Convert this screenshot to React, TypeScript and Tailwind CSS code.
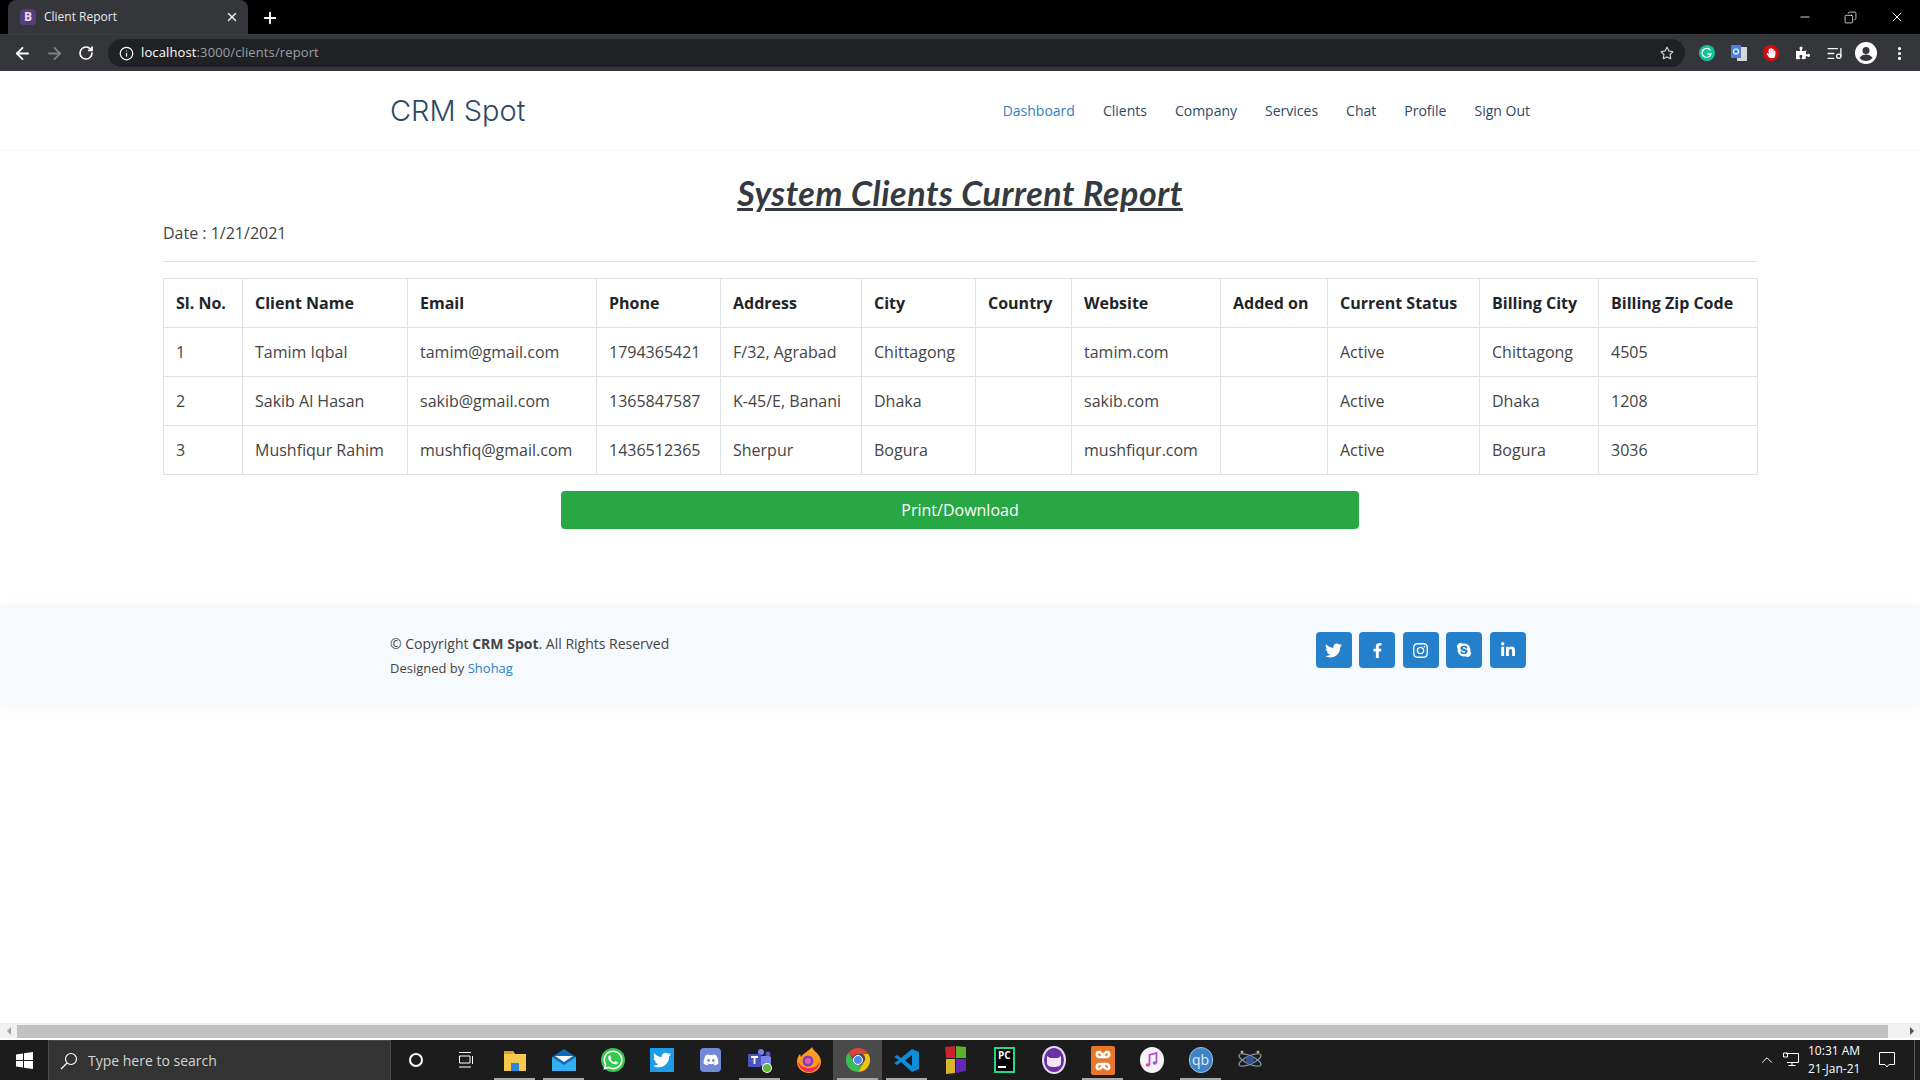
import React from "react";
import { FaTwitter, FaFacebookF, FaInstagram, FaSkype, FaLinkedinIn, FaWhatsapp, FaDiscord, FaPuzzlePiece, FaRegStar, FaHandPaper } from "react-icons/fa";
import { ArrowLeft, ArrowRight, RotateCw, Info, Plus, X, Minus, ChevronUp, ListMusic, EllipsisVertical, Copy } from "lucide-react";

const cols = [79, 165, 189, 124, 141, 114, 96, 149, 107, 152, 119, 159];
const heads = ["Sl. No.", "Client Name", "Email", "Phone", "Address", "City", "Country", "Website", "Added on", "Current Status", "Billing City", "Billing Zip Code"];
const rows = [
  ["1", "Tamim Iqbal", "tamim@gmail.com", "1794365421", "F/32, Agrabad", "Chittagong", "", "tamim.com", "", "Active", "Chittagong", "4505"],
  ["2", "Sakib Al Hasan", "sakib@gmail.com", "1365847587", "K-45/E, Banani", "Dhaka", "", "sakib.com", "", "Active", "Dhaka", "1208"],
  ["3", "Mushfiqur Rahim", "mushfiq@gmail.com", "1436512365", "Sherpur", "Bogura", "", "mushfiqur.com", "", "Active", "Bogura", "3036"],
];
const nav = ["Dashboard", "Clients", "Company", "Services", "Chat", "Profile", "Sign Out"];

function Chrome() {
  return (
    <div className="shrink-0 bg-black" style={{ fontFamily: '"Open Sans", sans-serif' }}>
      <div className="flex h-[34px] items-end pl-2">
        <div className="flex h-[34px] w-[240px] items-center rounded-t-lg bg-[#35363a] pl-3 pr-[9px] text-white">
          <span className="flex h-4 w-4 items-center justify-center rounded-sm bg-[#563d7c] text-[12px] font-bold leading-none text-[#e8e0f4]">B</span>
          <span className="ml-2 flex-1 text-[12px] text-[#e8eaed]">Client Report</span>
          <X size={14} strokeWidth={2.5} className="text-[#e8eaed]" />
        </div>
        <Plus size={18} strokeWidth={2.5} className="mb-[7px] ml-[13px] text-white" />
        <div className="mb-[9px] ml-auto flex items-center gap-[32px] pr-[15px] text-white">
          <Minus size={14} strokeWidth={1.4} />
          <Copy size={13} strokeWidth={1.4} className="-scale-x-100" />
          <X size={16} strokeWidth={1.4} />
        </div>
      </div>
      <div className="flex h-[37px] items-center border-t border-[#3c3d40] bg-[#35363a] pl-[13px] pr-[12px]">
        <ArrowLeft size={19} strokeWidth={2.3} className="text-white" />
        <ArrowRight size={19} strokeWidth={2.3} className="ml-[13px] text-[#7e8083]" />
        <RotateCw size={16} strokeWidth={2.5} className="ml-[14px] text-white" />
        <div className="ml-[14px] flex h-7 flex-1 items-center rounded-full bg-[#202124] pl-[11px] pr-[11px]">
          <Info size={15} strokeWidth={2} className="text-white" />
          <span className="ml-[7px] flex-1 text-[13px] tracking-[0.12px] text-[#9aa0a6]"><span className="text-white">localhost</span>:3000/clients/report</span>
          <FaRegStar size={14} className="text-[#d0d2d5]" />
        </div>
        <div className="ml-[14px] flex items-center text-white">
          <svg width="16" height="16" viewBox="0 0 16 16"><circle cx="8" cy="8" r="8" fill="#15c39a" /><path d="M11.5 5.500A4.500 4.500 0 1 0 12 9H8.500" fill="none" stroke="#fff" strokeWidth="1.3" /></svg>
          <svg width="16" height="16" viewBox="0 0 16 16" className="ml-[16px]"><rect x="6" y="2" width="10" height="14" fill="#d5d7da" /><rect width="10" height="13" fill="#4a80de" /><circle cx="5" cy="6.500" r="2.500" fill="none" stroke="#fff" strokeWidth="1.2" /></svg>
          <div className="ml-[16px] flex h-4 w-4 items-center justify-center rounded-full bg-[#d60b12]"><FaHandPaper size={10} className="text-white" /></div>
          <FaPuzzlePiece size={14} className="ml-[17px]" />
          <ListMusic size={17} strokeWidth={1.8} className="ml-[16px]" />
          <svg width="22" height="22" viewBox="0 0 22 22" className="ml-[12px]"><circle cx="11" cy="11" r="11" fill="#fff" /><circle cx="11" cy="8.500" r="3.500" fill="#35363a" /><path d="M4.500 16c1.500-2.500 4-3.500 6.500-3.500s5 1 6.500 3.500c-1.500 2-4 3-6.500 3s-5-1-6.500-3z" fill="#35363a" /></svg>
          <EllipsisVertical size={17} strokeWidth={2.5} className="ml-[14px]" />
        </div>
      </div>
    </div>
  );
}

function Header() {
  return (
    <header className="flex h-[80px] shrink-0 items-center border-b border-[#f1f3f5] pl-[390px] pr-[390px]">
      <div className="pb-[1px] text-[29px] font-light leading-none text-[#2c4964]" style={{ fontFamily: 'Inter, sans-serif' }}>CRM Spot</div>
      <nav className="ml-auto flex gap-[28px] pr-0 text-[14px] text-[#2c4964]">
        {nav.map((n, i) => (
          <span key={n} className={i === 0 ? "text-[#2f7fc1]" : ""}>{n}</span>
        ))}
      </nav>
    </header>
  );
}

function Report() {
  return (
    <main className="shrink-0 px-[163px] pt-[16px]">
      <h1 className="text-center text-[34px] font-bold italic leading-[51px] tracking-[0.55px] text-[#343a40] underline" style={{ fontFamily: 'Lato, sans-serif' }}>System Clients Current Report</h1>
      <p className="mt-[3px] text-[16px] leading-[24px] text-[#444444]">Date : 1/21/2021</p>
      <hr className="mt-[16px] border-[#e6e6e6]" />
      <table className="mt-4 w-[1595px] table-fixed border-collapse text-[16px] leading-[24px] text-[#212529]">
        <colgroup>
          {cols.map((c, i) => <col key={i} style={{ width: c }} />)}
        </colgroup>
        <thead>
          <tr>{heads.map((h) => <th key={h} className="whitespace-nowrap border border-[#dee2e6] p-3 text-left font-bold">{h}</th>)}</tr>
        </thead>
        <tbody>
          {rows.map((r) => (
            <tr key={r[0]}>{r.map((c, i) => <td key={i} className="whitespace-nowrap border border-[#dee2e6] p-3 text-[#444444]">{c}<span className="invisible">.</span></td>)}</tr>
          ))}
        </tbody>
      </table>
      <div className="mt-[16px] flex justify-center">
        <button className="h-[38px] w-[798px] rounded-[4px] bg-[#28a745] text-[16px] text-white">Print/Download</button>
      </div>
    </main>
  );
}

function Footer() {
  const icons: [React.ComponentType<{ size?: number }>, number][] = [[FaTwitter, 17], [FaFacebookF, 15], [FaInstagram, 17], [FaSkype, 16], [FaLinkedinIn, 16]];
  return (
    <footer className="mt-[76px] flex h-[100px] shrink-0 items-center bg-[#f6f9fe] pl-[390px] pr-[394px] shadow-[0_2px_15px_rgba(0,0,0,0.03)]">
      <div className="pt-[1px] text-[#444444]">
        <div className="text-[14px] leading-[24px]">© Copyright <b>CRM Spot</b>. All Rights Reserved</div>
        <div className="text-[13px] leading-[24px]">Designed by <span className="text-[#2f7fc1]">Shohag</span></div>
      </div>
      <div className="mb-[10px] ml-auto flex gap-[7.6px]">
        {icons.map(([I, s], i) => (
          <span key={i} className="flex h-9 w-9 items-center justify-center rounded-[4px] bg-[#2480ca] text-white"><I size={s} /></span>
        ))}
      </div>
    </footer>
  );
}

function Taskbar() {
  const icon = (k: number, el: React.ReactNode, under = false, active = false) => (
    <div key={k} className={`relative flex h-[40px] w-[49px] items-center justify-center ${active ? "bg-[#4a4a4a]" : ""}`}>
      {el}
      {under && <span className="absolute bottom-0 left-[4px] right-[4px] h-[2px] bg-[#a8a8a8]" />}
    </div>
  );
  return (
    <div className="flex h-[40px] shrink-0 items-center bg-[#1c1c1c] text-white" style={{ fontFamily: '"Open Sans", sans-serif' }}>
      <div className="flex w-[48px] justify-center">
        <svg width="17" height="17" viewBox="0 0 17 17" fill="#fff"><path d="M0 2.500 7 1.500V8H0zM8 1.300 17 0v8H8zM0 9h7v6.500L0 14.500zM8 9h9v8l-9-1.300z" /></svg>
      </div>
      <div className="flex h-[40px] w-[343px] items-center border border-b-0 border-[#4a4a4a] bg-[#333333] pl-[11px] text-[14px] text-[#d4d4d4]">
        <svg width="18" height="18" viewBox="0 0 18 18" fill="none" stroke="#fff" strokeWidth="1.200"><circle cx="11" cy="7" r="5.500" /><path d="M7 11 1 17" /></svg>
        <span className="ml-[10px]">Type here to search</span>
      </div>
      <div className="flex w-[50px] justify-center">
        <span className="h-[14px] w-[14px] rounded-full border-2 border-white" />
      </div>
      <div className="flex w-[49px] justify-center">
        <svg width="14" height="16" viewBox="0 0 14 16" fill="none" stroke="#fff"><path d="M0 .5h12M.5 4h10.500v7H.5zM0 15h12M13.500 4v8" /></svg>
      </div>
      <div className="flex">
        {icon(0, <svg width="24" height="22" viewBox="0 0 24 22"><path d="M1 2h9l2 3h11v17H1z" fill="#f6c84c" /><rect x="1" y="2" width="9" height="3" fill="#d9a227" /><rect x="8" y="14" width="8" height="8" fill="#2a86d8" /></svg>, true)}
        {icon(1, <svg width="24" height="24" viewBox="0 0 24 24"><path d="M12 1 24 9v14H0V9z" fill="#0f6cbd" /><path d="M0 9l12 8 12-8v14H0z" fill="#33b0f0" /><path d="M3 8h18l-9 6z" fill="#fff" /></svg>, true)}
        {icon(2, <span className="relative flex h-6 w-6 items-center justify-center rounded-full bg-[#35c851]"><FaWhatsapp size={22} className="text-white" /></span>)}
        {icon(3, <span className="flex h-6 w-6 items-center justify-center bg-[#1c9cea]"><FaTwitter size={18} className="text-white" /></span>)}
        {icon(4, <span className="flex h-6 w-[21px] items-center justify-center rounded-[4px] bg-[#7289da]"><FaDiscord size={16} className="text-white" /></span>)}
        {icon(5, <svg width="26" height="26" viewBox="0 0 26 26"><circle cx="14" cy="5" r="3" fill="#7b83eb" /><circle cx="21" cy="7" r="2.500" fill="#5059c9" /><rect x="13" y="9" width="11" height="10" rx="2" fill="#7b83eb" /><rect x="1" y="7" width="13" height="13" rx="1" fill="#4b53bc" /><path d="M4 10h7M7.500 10v7" stroke="#fff" strokeWidth="1.800" /><circle cx="20" cy="21" r="5" fill="#fff" /><circle cx="20" cy="21" r="4" fill="#5fb83a" /></svg>, true)}
        {icon(6, <svg width="24" height="26" viewBox="0 0 24 26"><path d="M15 0c1 4 9 7 9 15a12 11 0 0 1-24 0c0-3 1-6 3-8l1 3c2-4 7-5 11-10z" fill="#ff9a1f" /><path d="M1 14c0 6 5 11 11 11s11-5 11-11c-2 5-6 7-11 7S3 19 1 14z" fill="#f0304f" /><circle cx="11" cy="14" r="5.500" fill="#7a3ec8" /><circle cx="11" cy="14" r="3" fill="#e85a9a" /></svg>)}
        {icon(7, <svg width="24" height="24" viewBox="0 0 24 24"><path d="M12 0a12 12 0 0 1 10.400 6H12a6 6 0 0 0-5.600 3.800L2.600 4.500A12 12 0 0 1 12 0z" fill="#db4437" /><path d="M22.400 6A12 12 0 0 1 12 24l4.800-8.600A6 6 0 0 0 17 6z" fill="#f4c20d" /><path d="M12 24A12 12 0 0 1 2.600 4.500L8 13.500a5 5 0 0 0 8.800 1.900z" fill="#3cba54" /><circle cx="12" cy="12" r="4.500" fill="#4a8af4" stroke="#fff" strokeWidth="1" /></svg>, true, true)}
        {icon(8, <svg width="25" height="25" viewBox="0 0 25 25"><path d="M18 1 25 4v17l-7 3L7 14l-4 3-3-2 5-3-5-3 3-2 4 3z" fill="#0f8bd8" /><path d="M18 7v11l-7-5.500z" fill="#1c1c1c" /></svg>, true)}
        {icon(9, <svg width="22" height="28" viewBox="0 0 22 28"><path d="M0 1 10 0v12H1z" fill="#c8252c" /><path d="M11 0l10 1v11H11z" fill="#59b22c" /><path d="M1 13h9v14l-9 1z" fill="#d9b52c" /><path d="M11 13h10v12l-10 2z" fill="#6327b5" /></svg>)}
        {icon(10, <span className="flex h-[26px] w-[21px] flex-col justify-between border-2 border-[#21d789] bg-black px-[2px] py-[1px]"><span className="text-[10px] font-bold leading-[11px] text-white">PC</span><span className="mb-[2px] h-[2px] w-[8px] bg-white" /></span>)}
        {icon(11, <svg width="24" height="28" viewBox="0 0 24 28"><ellipse cx="12" cy="14" rx="12" ry="14" fill="#e8dcf3" /><ellipse cx="12" cy="14" rx="10" ry="12" fill="#6a2fa0" /><path d="M5 10l3 2h8l3-2v7c0 3-3 4-7 4s-7-1-7-4z" fill="#f1e9f8" /></svg>)}
        {icon(12, <svg width="24" height="29" viewBox="0 0 24 29"><rect width="24" height="29" rx="2" fill="#e8762b" /><path d="M8 6c-3 0-3 4 0 5h8c3-1 3-5 0-5-2 0-3 2-4 4-1-2-2-4-4-4zM8 23c-3 0-3-4 0-5h8c3 1 3 5 0 5-2 0-3-2-4-4-1 2-2 4-4 4z" fill="none" stroke="#fff" strokeWidth="2.500" /></svg>, true)}
        {icon(13, <svg width="24" height="26" viewBox="0 0 24 26"><ellipse cx="12" cy="13" rx="12" ry="13" fill="#f7f2f8" /><path d="M9.500 18V8l7-2v10" fill="none" stroke="#b94fc0" strokeWidth="1.800" /><ellipse cx="7.800" cy="18" rx="2.200" ry="1.800" fill="#e0508f" /><ellipse cx="14.800" cy="16" rx="2.200" ry="1.800" fill="#7a6fe0" /></svg>)}
        {icon(14, <span className="flex h-[26px] w-[24px] items-center justify-center rounded-full border border-[#9cc4ea] bg-[#3e84c6] text-[14px] leading-none text-[#e3effa]">qb</span>, true)}
        {icon(15, <svg width="26" height="22" viewBox="0 0 26 22" fill="none" stroke="#7f93a8" strokeWidth="1.200"><ellipse cx="13" cy="11" rx="12" ry="4" transform="rotate(25 13 11)" /><ellipse cx="13" cy="11" rx="12" ry="4" transform="rotate(-25 13 11)" /><circle cx="13" cy="11" r="4" fill="#33509a" stroke="none" /><circle cx="5" cy="3" r="1.500" fill="#c9b458" stroke="none" /><circle cx="21" cy="3" r="1.500" fill="#c9b458" stroke="none" /></svg>)}
      </div>
      <div className="ml-auto flex items-center pr-[5px]">
        <ChevronUp size={18} strokeWidth={1.3} className="text-white" />
        <svg width="16" height="16" viewBox="0 0 16 16" fill="none" stroke="#fff" className="ml-[7px]"><path d="M3 1.500h12.500v9H4M9 10.500v3M5.500 13.500h7M.5 1h4v4h-4z" /></svg>
        <div className="ml-[9px] w-[52px] text-right text-[12px] leading-[18px] text-white"><div className="whitespace-nowrap">10:31 AM</div><div className="whitespace-nowrap">21-Jan-21</div></div>
        <svg width="16" height="16" viewBox="0 0 16 16" fill="none" stroke="#fff" className="ml-[19px]"><path d="M.5.500h15v12H10L8 15l-2-2.500H.5z" /></svg>
        <span className="ml-[19px] h-[40px] w-[1px] bg-[#5a5a5a]" />
      </div>
    </div>
  );
}

function Scrollbar() {
  return (
    <div className="relative flex h-[17px] shrink-0 items-start bg-[#f1f1f1]">
      <div className="flex h-[15px] w-[17px] items-center justify-center"><span className="border-y-[4px] border-r-[4px] border-y-transparent border-r-[#a3a3a3]" /></div>
      <div className="mt-[2px] h-[13px] flex-1 bg-[#c1c1c1]" />
      <div className="flex h-[15px] w-[32px] items-center justify-end pr-[6px]"><span className="border-y-[4px] border-l-[4px] border-y-transparent border-l-[#505050]" /></div>
      <div className="absolute bottom-0 left-0 right-0 h-[2px] bg-white" />
    </div>
  );
}

export default function App() {
  return (
    <div className="flex h-[1080px] w-[1920px] flex-col overflow-hidden bg-white" style={{ fontFamily: '"Open Sans", sans-serif' }}>
      <Chrome />
      <Header />
      <Report />
      <Footer />
      <div className="flex-1" />
      <Scrollbar />
      <Taskbar />
    </div>
  );
}
